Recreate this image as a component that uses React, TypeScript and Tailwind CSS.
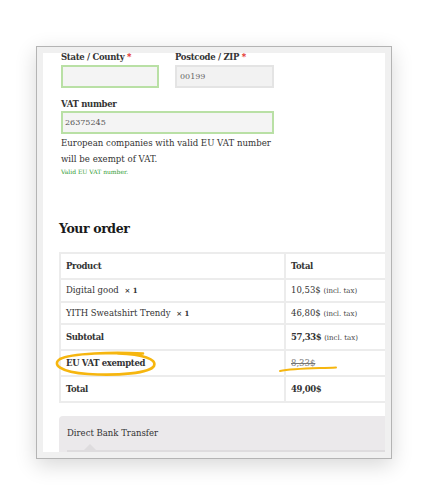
import React from 'react';

const serif = { fontFamily: '"DejaVu Serif", "Liberation Serif", serif' };

const rows = [
  { name: 'Digital good', total: '10,53$', h: 'h-[23px]' },
  { name: 'YITH Sweatshirt Trendy', total: '46,80$', h: 'h-[22px]' },
];

const cell = 'border-2 border-[#ececec] pl-[5px]';
const strong = 'font-bold text-[8.5px] tracking-[-0.35px]';

const App = () => {
  return (
    <div className="w-[422px] h-[488px] bg-white pl-[36px] pt-[46px]" style={serif}>
      <div className="w-[356px] h-[413px] border border-[#b4b4b4] bg-[#f0f0f0] pt-[6px] pl-[6px] shadow-[0_6px_20px_rgba(0,0,0,0.16)]">
        <div className="relative w-[342px] h-[399px] bg-white overflow-hidden pl-[16px] text-[#2b2b2b]">
          {/* billing fields */}
          <div className="pl-[2px] -mt-[3px]">
            <div className="flex gap-[16px]">
              <div className="w-[98px]">
                <div className="text-[8.5px] tracking-[-0.3px] leading-[15px] font-bold text-[#333]">
                  State / County <span className="text-[#e2231a]">*</span>
                </div>
                <div className="h-[23px] border-2 border-[#b9e0a5] bg-[#f4f4f4]"></div>
              </div>
              <div className="w-[99px]">
                <div className="text-[8.5px] tracking-[-0.3px] leading-[15px] font-bold text-[#333]">
                  Postcode / ZIP <span className="text-[#e2231a]">*</span>
                </div>
                <div className="h-[23px] border-2 border-[#e4e4e4] bg-[#f2f2f2] flex items-center pl-[3px] text-[8px] text-[#666]">
                  00199
                </div>
              </div>
            </div>
            <div className="mt-[9px] text-[8.5px] tracking-[-0.3px] leading-[14px] font-bold text-[#333]">VAT number</div>
            <div className="w-[213px] h-[23px] border-2 border-[#b9e0a5] bg-[#f4f4f4] flex items-center pl-[2px] text-[8px] text-[#555]">
              26375245
            </div>
            <p className="mt-[1px] w-[220px] text-[8.6px] leading-[16px] text-[#333]">
              European companies with valid EU VAT number will be exempt of VAT.
            </p>
            <p className="text-[6px] leading-[10px] text-[#2f9a2f]">Valid EU VAT number.</p>
          </div>

          <h3 className="mt-[44px] text-[12.5px] tracking-[-0.4px] leading-[16px] font-bold text-[#1a1a1a]">Your order</h3>

          {/* order table */}
          <table className="mt-[15px] w-[340px] border-collapse border-2 border-[#ececec] text-[8.5px] text-[#333]">
            <tbody>
              <tr className={`h-[26px] ${strong}`}>
                <td className={`w-[225px] ${cell}`}>Product</td>
                <td className={cell}>Total</td>
              </tr>
              {rows.map((r) => (
                <tr key={r.name} className={r.h}>
                  <td className={cell}>
                    {r.name} <span className="ml-[3px] font-bold text-[7px]">× 1</span>
                  </td>
                  <td className={cell}>
                    {r.total} <span className="text-[7px] text-[#444]">(incl. tax)</span>
                  </td>
                </tr>
              ))}
              <tr className="h-[26px]">
                <td className={`${cell} ${strong}`}>Subtotal</td>
                <td className={cell}>
                  <span className={strong}>57,33$</span>{' '}
                  <span className="text-[7px] text-[#444]">(incl. tax)</span>
                </td>
              </tr>
              <tr className="h-[26px]">
                <td className={`${cell} ${strong}`}>EU VAT exempted</td>
                <td className={`${cell} text-[#777] line-through`}>8,33$</td>
              </tr>
              <tr className={`h-[26px] ${strong}`}>
                <td className={cell}>Total</td>
                <td className={cell}>49,00$</td>
              </tr>
            </tbody>
          </table>

          {/* payment method */}
          <div className="mt-[13px] w-[340px] bg-[#ebe9eb] rounded-tl-[4px] pt-[10px] pl-[8px]">
            <div className="text-[8.5px] leading-[14px] text-[#333]">Direct Bank Transfer</div>
            <div className="relative mt-[10px] h-[20px] bg-[#dedcde]">
              <div className="absolute -top-[6px] left-[17px] w-0 h-0 border-l-[6px] border-r-[6px] border-b-[6px] border-l-transparent border-r-transparent border-b-[#dedcde]"></div>
            </div>
          </div>

          {/* hand-drawn highlights */}
          <svg className="absolute left-0 top-0 pointer-events-none" width="342" height="399" viewBox="0 0 342 399">
            <path
              d="M100 300.5 C 70 299, 28 300, 17 306 C 9 311, 16 319, 45 321 C 75 323, 107 320, 111 313 C 114 306, 100 301.5, 75 300.5"
              fill="none"
              stroke="#f6b60f"
              strokeWidth="2.6"
              strokeLinecap="round"
            />
            <path
              d="M237 318 C 250 315.5, 270 315.5, 293 314.5"
              fill="none"
              stroke="#f6b60f"
              strokeWidth="2"
              strokeLinecap="round"
            />
          </svg>
        </div>
      </div>
    </div>
  );
};

export default App;
